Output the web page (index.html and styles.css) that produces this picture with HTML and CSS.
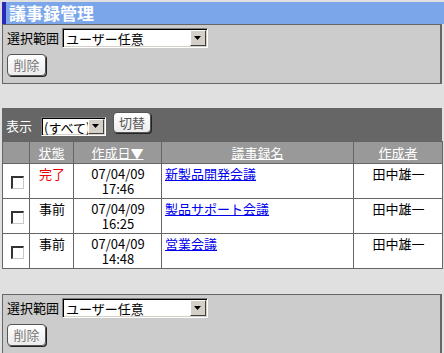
FILE: index.html
```html
<!DOCTYPE html>
<html lang="ja">
<head>
    <meta charset="UTF-8">
    <title>議事録管理</title>
    <link rel="stylesheet" href="styles.css">
</head>
<body>
    <div class="title">議事録管理</div>

    <!-- 選択範囲 (上) -->
    <div class="panel">
        <div class="range-row">
            <span class="label">選択範囲</span>
            <span class="combo range">
                <select><option>ユーザー任意</option></select>
                <span class="drop"><svg width="8" height="5" viewBox="0 0 8 5"><path d="M0 0h7L3.5 4z" fill="#000"/></svg></span>
            </span>
        </div>
        <button class="btn disabled">削除</button>
    </div>

    <!-- 一覧 -->
    <div class="list">
        <div class="toolbar">
            <span class="tool-label">表示</span>
            <span class="combo filter">
                <select><option>(すべて)</option></select>
                <span class="drop"><svg width="8" height="5" viewBox="0 0 8 5"><path d="M0 0h7L3.5 4z" fill="#000"/></svg></span>
            </span>
            <button class="btn switch">切替</button>
        </div>
        <table class="minutes">
            <colgroup>
                <col class="c-check">
                <col class="c-state">
                <col class="c-date">
                <col class="c-name">
                <col class="c-author">
            </colgroup>
            <thead>
                <tr>
                    <th></th>
                    <th><a href="#" class="sort">状態</a></th>
                    <th><a href="#" class="sort">作成日▼</a></th>
                    <th><a href="#" class="sort">議事録名</a></th>
                    <th><a href="#" class="sort">作成者</a></th>
                </tr>
            </thead>
            <tbody>
                <tr>
                    <td class="check"><input type="checkbox"></td>
                    <td class="center done">完了</td>
                    <td class="center">07/04/09<br>17:46</td>
                    <td><a href="#">新製品開発会議</a></td>
                    <td class="center">田中雄一</td>
                </tr>
                <tr>
                    <td class="check"><input type="checkbox"></td>
                    <td class="center">事前</td>
                    <td class="center">07/04/09<br>16:25</td>
                    <td><a href="#">製品サポート会議</a></td>
                    <td class="center">田中雄一</td>
                </tr>
                <tr>
                    <td class="check"><input type="checkbox"></td>
                    <td class="center">事前</td>
                    <td class="center">07/04/09<br>14:48</td>
                    <td><a href="#">営業会議</a></td>
                    <td class="center">田中雄一</td>
                </tr>
            </tbody>
        </table>
    </div>

    <!-- 選択範囲 (下) -->
    <div class="panel bottom">
        <div class="range-row">
            <span class="label">選択範囲</span>
            <span class="combo range">
                <select><option>ユーザー任意</option></select>
                <span class="drop"><svg width="8" height="5" viewBox="0 0 8 5"><path d="M0 0h7L3.5 4z" fill="#000"/></svg></span>
            </span>
        </div>
        <button class="btn disabled">削除</button>
    </div>
</body>
</html>
```

FILE: styles.css
```css
/* 全体 */
body {
    margin: 0;
    padding: 2px 2px 0;
    background-color: #e0e0e0;
    font-family: "Noto Sans CJK JP", sans-serif;
    font-size: 13px;
    line-height: 14px;
    color: #000;
}

/* タイトルバー */
.title {
    height: 22px;
    margin-right: -2px;
    padding-left: 3px;
    background-color: #7ba6ea;
    border-left: 4px solid #2a2ab8;
    color: #fff;
    font-size: 17px;
    font-weight: bold;
    line-height: 22px;
}

/* 選択範囲パネル */
.panel {
    box-sizing: border-box;
    height: 60px;
    padding: 3px 4px 0;
    background-color: #ccc;
    border: 1px solid #666;
    border-right-width: 2px;
}
.panel.bottom {
    margin-top: 25px;
}
.range-row {
    display: flex;
    align-items: center;
    gap: 3px;
    height: 20px;
}

/* コンボボックス */
.combo {
    position: relative;
    display: inline-block;
}
.combo select {
    box-sizing: border-box;
    appearance: none;
    -webkit-appearance: none;
    margin: 0;
    padding: 0 0 0 3px;
    background-color: #fff;
    border-top: 1px solid #808080;
    border-left: 1px solid #808080;
    border-right: 1px solid #fff;
    border-bottom: 1px solid #fff;
    box-shadow: inset 1px 1px 0 #000, inset -1px -1px 0 #d4d0c8;
    border-radius: 0;
    font-family: inherit;
    font-size: 13px;
    color: #000;
}
.combo.range select {
    width: 146px;
    height: 20px;
}
.combo.filter select {
    width: 65px;
    height: 19px;
    padding-left: 2px;
}
.drop {
    position: absolute;
    top: 2px;
    right: 2px;
    box-sizing: border-box;
    width: 16px;
    height: 16px;
    display: flex;
    align-items: center;
    justify-content: center;
    background-color: #d4d0c8;
    border-top: 1px solid #fff;
    border-left: 1px solid #fff;
    border-right: 1px solid #404040;
    border-bottom: 1px solid #404040;
    pointer-events: none;
}
.combo.filter .drop {
    height: 15px;
}

/* ボタン */
.btn {
    box-sizing: border-box;
    height: 22px;
    padding: 0;
    background: linear-gradient(#fff, #ececec);
    border: 1px solid #555;
    border-radius: 4px;
    box-shadow: 1px 1px 0 #222;
    font-family: inherit;
    font-size: 13px;
    line-height: 14px;
    white-space: nowrap;
    color: #777;
    cursor: pointer;
}
.panel .btn {
    display: block;
    width: 39px;
    margin-top: 6px;
}
.btn.switch {
    width: 38px;
    height: 21px;
    margin-left: 7px;
    color: #555;
}

/* 一覧 */
.list {
    margin-top: 24px;
}
.toolbar {
    box-sizing: border-box;
    height: 33px;
    padding: 4px 4px 0;
    display: flex;
    align-items: flex-start;
    background-color: #666;
}
.tool-label {
    margin-top: 7px;
    margin-right: 9px;
    color: #fff;
}
.toolbar .combo {
    margin-top: 5px;
}

.minutes {
    width: 440px;
    table-layout: fixed;
    border-collapse: collapse;
    border: 1px solid #666;
}
.c-check { width: 27px; }
.c-state { width: 44px; }
.c-date { width: 88px; }
.c-name { width: 192px; }
.c-author { width: 89px; }

.minutes th {
    height: 21px;
    padding: 0;
    background-color: #999;
    border: 1px solid #666;
    font-weight: normal;
    text-align: center;
}
.minutes th a.sort {
    color: #fff;
}
.minutes td {
    height: 30px;
    padding: 2px 2px 2px 3px;
    line-height: 15px;
    background-color: #fff;
    border: 1px solid #666;
    vertical-align: top;
}
.minutes td.center {
    text-align: center;
}
.minutes td.done {
    color: #e00;
}
.minutes td a {
    color: #00e;
}
.minutes td.check {
    padding: 0;
    text-align: center;
    vertical-align: middle;
}
.check input {
    appearance: none;
    -webkit-appearance: none;
    box-sizing: border-box;
    width: 13px;
    height: 13px;
    margin: 0 0 0 2px;
    vertical-align: middle;
    background-color: #fff;
    border-top: 2px solid #333;
    border-left: 2px solid #333;
    border-right: 1px solid #c8c8c8;
    border-bottom: 1px solid #c8c8c8;
    border-radius: 0;
}
```
